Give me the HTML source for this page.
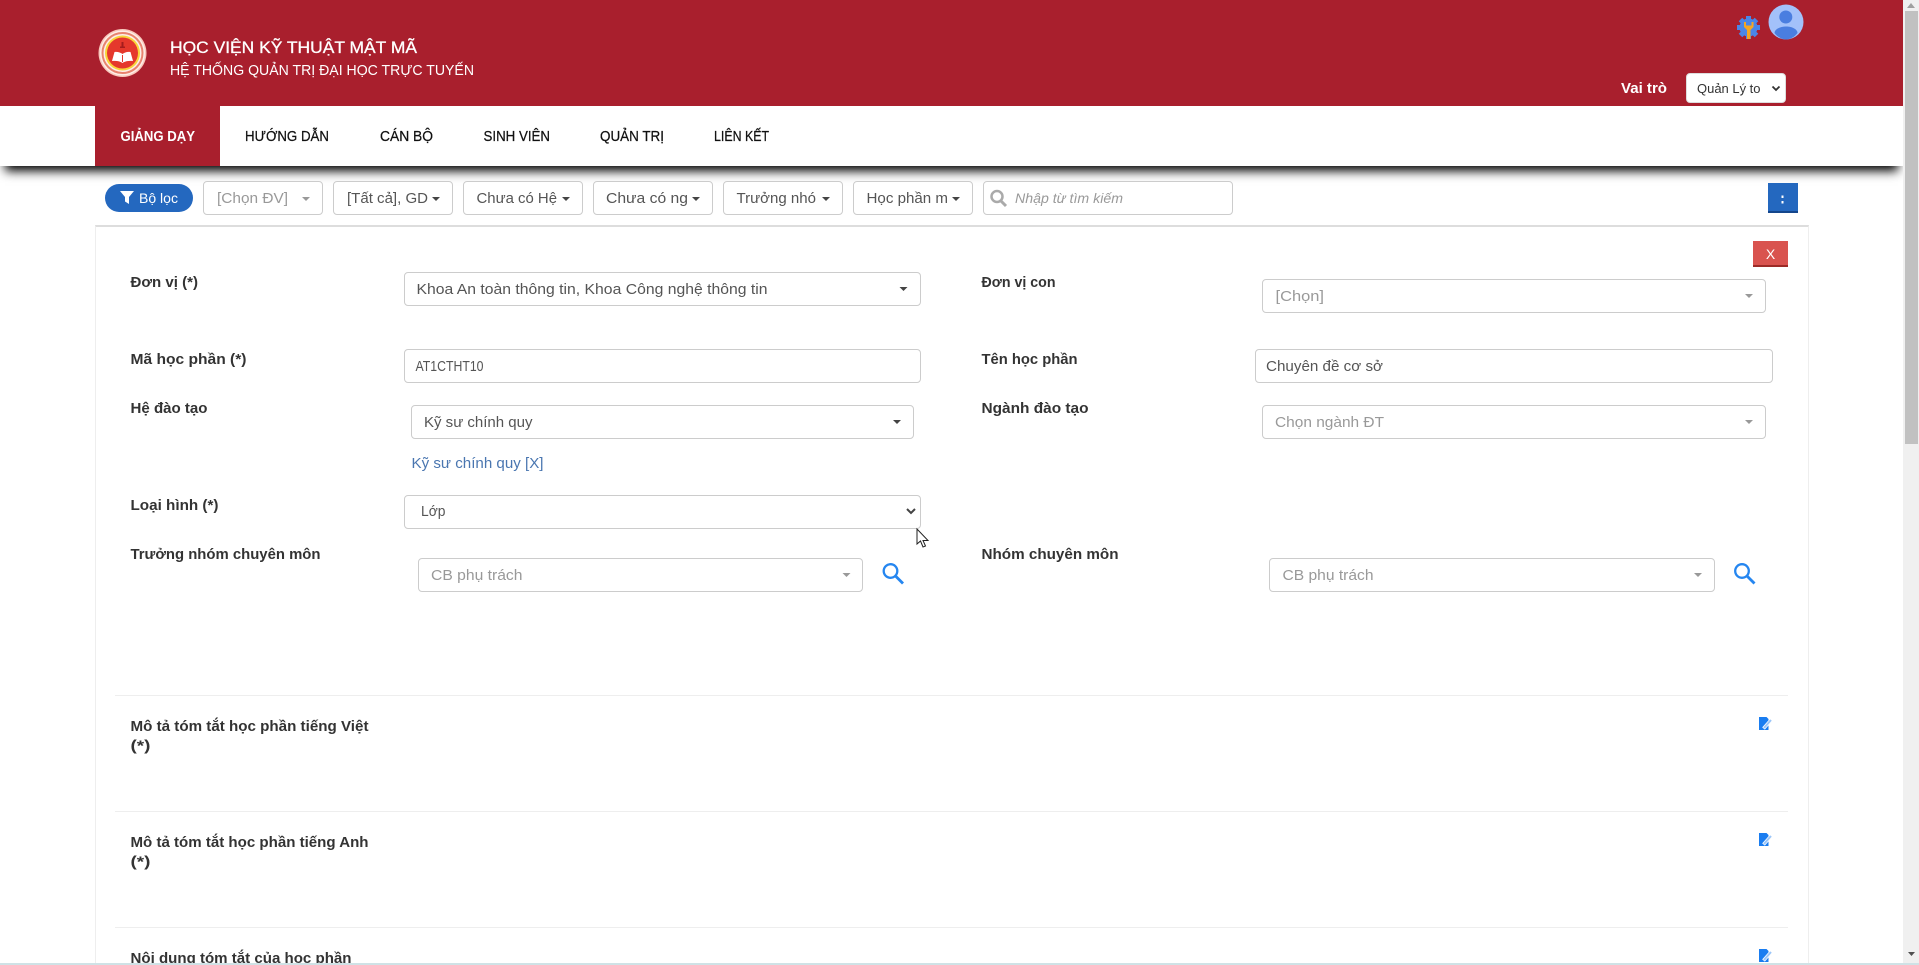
<!DOCTYPE html>
<html lang="vi"><head><meta charset="utf-8"><title>Học viện Kỹ thuật Mật mã</title>
<style>
html,body{margin:0;padding:0;width:1919px;height:965px;overflow:hidden;background:#fff;font-family:"Liberation Sans",sans-serif}
body{position:relative}
.a{position:absolute;box-sizing:border-box}
.b{position:absolute;box-sizing:border-box;border:1px solid #ccc;border-radius:4px;background:#fff}
svg.t{position:absolute;left:0;top:0}
text{font-family:"Liberation Sans",sans-serif;font-size:14.5px;fill:#555}
.l{font-weight:700;fill:#333;font-size:14.5px}
.n{fill:#111;font-size:14.5px;stroke:#111;stroke-width:.25px}
.g{fill:#999}
</style></head><body>
<div class="a" style="left:0;top:0;width:1903px;height:106px;background:#a91f2d"></div>
<div class="a" style="left:0;top:106px;width:1903px;height:60px;background:#fff;box-shadow:0 10px 10px -5px #000"></div>
<div class="a" style="left:95px;top:106px;width:125px;height:60px;background:#a91f2d"></div>

<div class="a" style="left:105px;top:184px;width:88px;height:28px;border-radius:14px;background:#2468bf"></div>
<div class="b" style="left:203px;top:181px;width:120px;height:34px"></div>
<div class="b" style="left:333px;top:181px;width:120px;height:34px"></div>
<div class="b" style="left:463px;top:181px;width:120px;height:34px"></div>
<div class="b" style="left:593px;top:181px;width:120px;height:34px"></div>
<div class="b" style="left:723px;top:181px;width:120px;height:34px"></div>
<div class="b" style="left:853px;top:181px;width:120px;height:34px"></div>
<div class="b" style="left:983px;top:181px;width:250px;height:34px"></div>
<div class="a" style="left:1768px;top:183px;width:30px;height:30px;background:#2468bf;border-bottom:2px solid #14468c"></div>

<div class="a" style="left:95px;top:225px;width:1714px;height:760px;border:1px solid #eee;border-top:2px solid #ddd"></div>
<div class="a" style="left:1753px;top:241px;width:35px;height:26px;background:#d9534f;border-bottom:2px solid #9c2b27"></div>

<div class="b" style="left:404px;top:272px;width:517px;height:34px"></div>
<div class="b" style="left:1262px;top:279px;width:504px;height:34px"></div>
<div class="b" style="left:404px;top:349px;width:517px;height:34px"></div>
<div class="b" style="left:1255px;top:349px;width:518px;height:34px"></div>
<div class="b" style="left:411px;top:405px;width:503px;height:34px"></div>
<div class="b" style="left:1262px;top:405px;width:504px;height:34px"></div>
<div class="b" style="left:404px;top:495px;width:517px;height:34px"></div>
<div class="b" style="left:418px;top:558px;width:445px;height:34px"></div>
<div class="b" style="left:1269px;top:558px;width:446px;height:34px"></div>
<div class="b" style="left:1686px;top:73px;width:100px;height:30px;border-color:#ddd"></div>

<div class="a" style="left:115px;top:695px;width:1673px;height:1px;background:#eee"></div>
<div class="a" style="left:115px;top:811px;width:1673px;height:1px;background:#eee"></div>
<div class="a" style="left:115px;top:927px;width:1673px;height:1px;background:#eee"></div>

<div class="a" style="left:1903px;top:0;width:16px;height:965px;background:#f0f0f0"></div>
<div class="a" style="left:1905px;top:11px;width:13px;height:433px;background:#c1c1c1"></div>
<div class="a" style="left:0;top:963px;width:1919px;height:2px;background:#cfe2e6"></div>

<svg class="t" width="1919" height="965" viewBox="0 0 1919 965" xmlns="http://www.w3.org/2000/svg">
<!-- logo -->
<circle cx="122.500" cy="53" r="24" fill="#f9c9bd"/>
<circle cx="122.500" cy="53" r="22.500" fill="#fdeee8"/>
<circle cx="122.500" cy="53" r="20" fill="none" stroke="#e8836f" stroke-width="2"/>
<circle cx="122.500" cy="53" r="17.500" fill="#f8d53a"/>
<circle cx="122.500" cy="53" r="15.500" fill="#e5382c"/>
<path d="M112 61l2.500-9c3-.5 6 .5 8 2 2-1.500 5-2.500 8-2l2.500 9c-4-.5-8 0-10.500 2-2.500-2-6.500-2.500-10.500-2z" fill="#fff"/>
<path d="M122.500 55v7" stroke="#e5382c" stroke-width="1"/>
<rect x="121.500" y="42" width="2" height="6" fill="#a51c1c"/>
<rect x="120" y="46.500" width="5" height="1.500" fill="#a51c1c"/>

<text x="170" y="53" style="font-size:16.5px;fill:#fff;stroke:#fff;stroke-width:.3px" textLength="247" lengthAdjust="spacingAndGlyphs">HỌC VIỆN KỸ THUẬT MẬT MÃ</text>
<text x="170" y="75" style="font-size:14.5px;fill:#fff" textLength="304" lengthAdjust="spacingAndGlyphs">HỆ THỐNG QUẢN TRỊ ĐẠI HỌC TRỰC TUYẾN</text>

<!-- gear + avatar -->
<circle cx="1748.500" cy="27.500" r="9" fill="#4a86e8"/>
<g stroke="#4a86e8" stroke-width="5"><path d="M1748.500 16v23M1737 27.500h23M1740.500 19.500l16 16M1756.500 19.500l-16 16"/></g>
<path d="M1744 22v5l3 3v9h3.500v-9l3-3v-5l-2 0v3.500h-5.500V22z" fill="#f5a623"/>
<circle cx="1786" cy="22" r="17.500" fill="#a3c1fa"/>
<circle cx="1785.800" cy="17" r="6.500" fill="#4a7ee0"/>
<path d="M1774.500 33c0-3.500 5-6.500 11.500-6.500s11.500 3 11.500 6.500c-3 4-7.500 6.500-11.500 6.500s-8.500-2.500-11.500-6.500z" fill="#4a7ee0"/>

<text x="1621" y="93" style="font-size:14.5px;fill:#fff;font-weight:700" textLength="46" lengthAdjust="spacingAndGlyphs">Vai trò</text>
<text x="1697" y="93" style="font-size:12.5px;fill:#333" textLength="63.500" lengthAdjust="spacingAndGlyphs">Quản Lý to</text>
<path d="M1772.500 86.500l3.500 3.500 3.500-3.500" fill="none" stroke="#333" stroke-width="1.800"/>

<!-- nav -->
<text x="120.500" y="141" style="font-size:14.5px;fill:#fff;font-weight:700" textLength="74.500" lengthAdjust="spacingAndGlyphs">GIẢNG DẠY</text>
<text class="n" x="245" y="141" textLength="84" lengthAdjust="spacingAndGlyphs">HƯỚNG DẪN</text>
<text class="n" x="380" y="141" textLength="53" lengthAdjust="spacingAndGlyphs">CÁN BỘ</text>
<text class="n" x="483.500" y="141" textLength="66.500" lengthAdjust="spacingAndGlyphs">SINH VIÊN</text>
<text class="n" x="600" y="141" textLength="64" lengthAdjust="spacingAndGlyphs">QUẢN TRỊ</text>
<text class="n" x="714" y="141" textLength="55" lengthAdjust="spacingAndGlyphs">LIÊN KẾT</text>

<!-- toolbar -->
<path d="M120 191h14l-5 6v7l-4-2.500v-4.500z" fill="#fff"/>
<text x="139" y="203" style="font-size:14px;fill:#fff" textLength="39" lengthAdjust="spacingAndGlyphs">Bộ lọc</text>
<text class="g" x="217" y="203" textLength="71" lengthAdjust="spacingAndGlyphs">[Chọn ĐV]</text>
<path d="M302 197h8l-4 4z" fill="#999"/>
<text x="347" y="203" textLength="81" lengthAdjust="spacingAndGlyphs">[Tất cả], GD</text>
<path d="M432 197h8l-4 4z" fill="#444"/>
<text x="476.500" y="203" textLength="80.500" lengthAdjust="spacingAndGlyphs">Chưa có Hệ</text>
<path d="M562 197h8l-4 4z" fill="#444"/>
<text x="606" y="203" textLength="82" lengthAdjust="spacingAndGlyphs">Chưa có ng</text>
<path d="M692 197h8l-4 4z" fill="#444"/>
<text x="736.500" y="203" textLength="79.500" lengthAdjust="spacingAndGlyphs">Trưởng nhó</text>
<path d="M822 197h8l-4 4z" fill="#444"/>
<text x="866.500" y="203" textLength="81.500" lengthAdjust="spacingAndGlyphs">Học phần m</text>
<path d="M952 197h8l-4 4z" fill="#444"/>
<circle cx="997" cy="196.500" r="5.500" fill="none" stroke="#aaa" stroke-width="2.500"/>
<path d="M1001 201l5 5" stroke="#aaa" stroke-width="3"/>
<text class="g" x="1015" y="203" font-style="italic" style="font-size:13.500px;fill:#999" textLength="108" lengthAdjust="spacingAndGlyphs">Nhập từ tìm kiếm</text>
<rect x="1781.500" y="195.500" width="2" height="2.500" fill="#fff"/><rect x="1781.500" y="201" width="2" height="2.500" fill="#fff"/>
<text x="1770.500" y="259" style="font-size:14px;fill:#fff" text-anchor="middle">X</text>

<!-- form labels -->
<text class="l" x="130.500" y="287" textLength="67.500" lengthAdjust="spacingAndGlyphs">Đơn vị (*)</text>
<text class="l" x="981.500" y="287" textLength="74" lengthAdjust="spacingAndGlyphs">Đơn vị con</text>
<text class="l" x="130.500" y="364" textLength="116" lengthAdjust="spacingAndGlyphs">Mã học phần (*)</text>
<text class="l" x="981.500" y="364" textLength="96" lengthAdjust="spacingAndGlyphs">Tên học phần</text>
<text class="l" x="130.500" y="413" textLength="77" lengthAdjust="spacingAndGlyphs">Hệ đào tạo</text>
<text class="l" x="981.500" y="413" textLength="107" lengthAdjust="spacingAndGlyphs">Ngành đào tạo</text>
<text class="l" x="130.500" y="510" textLength="88" lengthAdjust="spacingAndGlyphs">Loại hình (*)</text>
<text class="l" x="130.500" y="559" textLength="190" lengthAdjust="spacingAndGlyphs">Trưởng nhóm chuyên môn</text>
<text class="l" x="981.500" y="559" textLength="137" lengthAdjust="spacingAndGlyphs">Nhóm chuyên môn</text>

<!-- field values -->
<text x="416.500" y="294" textLength="351" lengthAdjust="spacingAndGlyphs">Khoa An toàn thông tin, Khoa Công nghệ thông tin</text>
<path d="M899.500 287h8l-4 4z" fill="#444"/>
<text class="g" x="1275.500" y="301" textLength="48.500" lengthAdjust="spacingAndGlyphs">[Chọn]</text>
<path d="M1745 294h8l-4 4z" fill="#999"/>
<text x="415.500" y="371" style="font-size:15px" textLength="68" lengthAdjust="spacingAndGlyphs">AT1CTHT10</text>
<text x="1266" y="371" textLength="117" lengthAdjust="spacingAndGlyphs">Chuyên đề cơ sở</text>
<text x="424" y="427" textLength="108.500" lengthAdjust="spacingAndGlyphs">Kỹ sư chính quy</text>
<path d="M893 420h8l-4 4z" fill="#444"/>
<text class="g" x="1275" y="427" textLength="109" lengthAdjust="spacingAndGlyphs">Chọn ngành ĐT</text>
<path d="M1745 420h8l-4 4z" fill="#999"/>
<text x="411.500" y="468" style="font-size:14.500px;fill:#4a76b0" textLength="132" lengthAdjust="spacingAndGlyphs">Kỹ sư chính quy [X]</text>
<text x="421" y="516" textLength="24.500" lengthAdjust="spacingAndGlyphs">Lớp</text>
<path d="M907 509l4 4 4-4" fill="none" stroke="#444" stroke-width="2"/>
<text class="g" x="431" y="580" textLength="91.500" lengthAdjust="spacingAndGlyphs">CB phụ trách</text>
<path d="M842.500 573h8l-4 4z" fill="#999"/>
<text class="g" x="1282.500" y="580" textLength="91" lengthAdjust="spacingAndGlyphs">CB phụ trách</text>
<path d="M1694 573h8l-4 4z" fill="#999"/>
<g fill="none" stroke="#2586f0">
<circle cx="890.500" cy="571" r="6.800" stroke-width="2.300"/><path d="M895.500 576l7.500 7.500" stroke-width="2.800"/>
<circle cx="1742" cy="571" r="6.800" stroke-width="2.300"/><path d="M1747 576l7.500 7.500" stroke-width="2.800"/>
</g>
<!-- cursor -->
<path d="M917 529v15l3.500-3 2.500 6 2.500-1-2.500-5.500h5z" fill="#fff" stroke="#222" stroke-width="1"/>

<!-- long labels -->
<text class="l" x="130.500" y="731" textLength="238" lengthAdjust="spacingAndGlyphs">Mô tả tóm tắt học phần tiếng Việt</text>
<text class="l" x="130.500" y="750.500" textLength="20" lengthAdjust="spacingAndGlyphs">(*)</text>
<text class="l" x="130.500" y="847" textLength="238" lengthAdjust="spacingAndGlyphs">Mô tả tóm tắt học phần tiếng Anh</text>
<text class="l" x="130.500" y="866.500" textLength="20" lengthAdjust="spacingAndGlyphs">(*)</text>
<text class="l" x="130.500" y="963" textLength="221" lengthAdjust="spacingAndGlyphs">Nội dung tóm tắt của học phần</text>
<rect x="0" y="963" width="1919" height="2" fill="#cfe2e6"/>

<!-- edit icons -->
<g><path d="M1759 717h7.500l2 2v11h-9.500z" fill="#1a7df0"/><path d="M1763.500 728.500l8-9" stroke="#fff" stroke-width="3.500"/><path d="M1764 728l7-8" stroke="#9cc6f8" stroke-width="2"/></g>
<g><path d="M1759 833h7.500l2 2v11h-9.500z" fill="#1a7df0"/><path d="M1763.500 844.500l8-9" stroke="#fff" stroke-width="3.500"/><path d="M1764 844l7-8" stroke="#9cc6f8" stroke-width="2"/></g>
<g><path d="M1759 949h7.500l2 2v11h-9.500z" fill="#1a7df0"/><path d="M1763.500 960.500l8-9" stroke="#fff" stroke-width="3.500"/><path d="M1764 960l7-8" stroke="#9cc6f8" stroke-width="2"/></g>

<!-- scrollbar arrows -->
<path d="M1907 8l4-5 4 5z" fill="#a0a0a0"/>
<path d="M1908 952h7l-3.500 4z" fill="#505050"/>
</svg>
</body></html>
